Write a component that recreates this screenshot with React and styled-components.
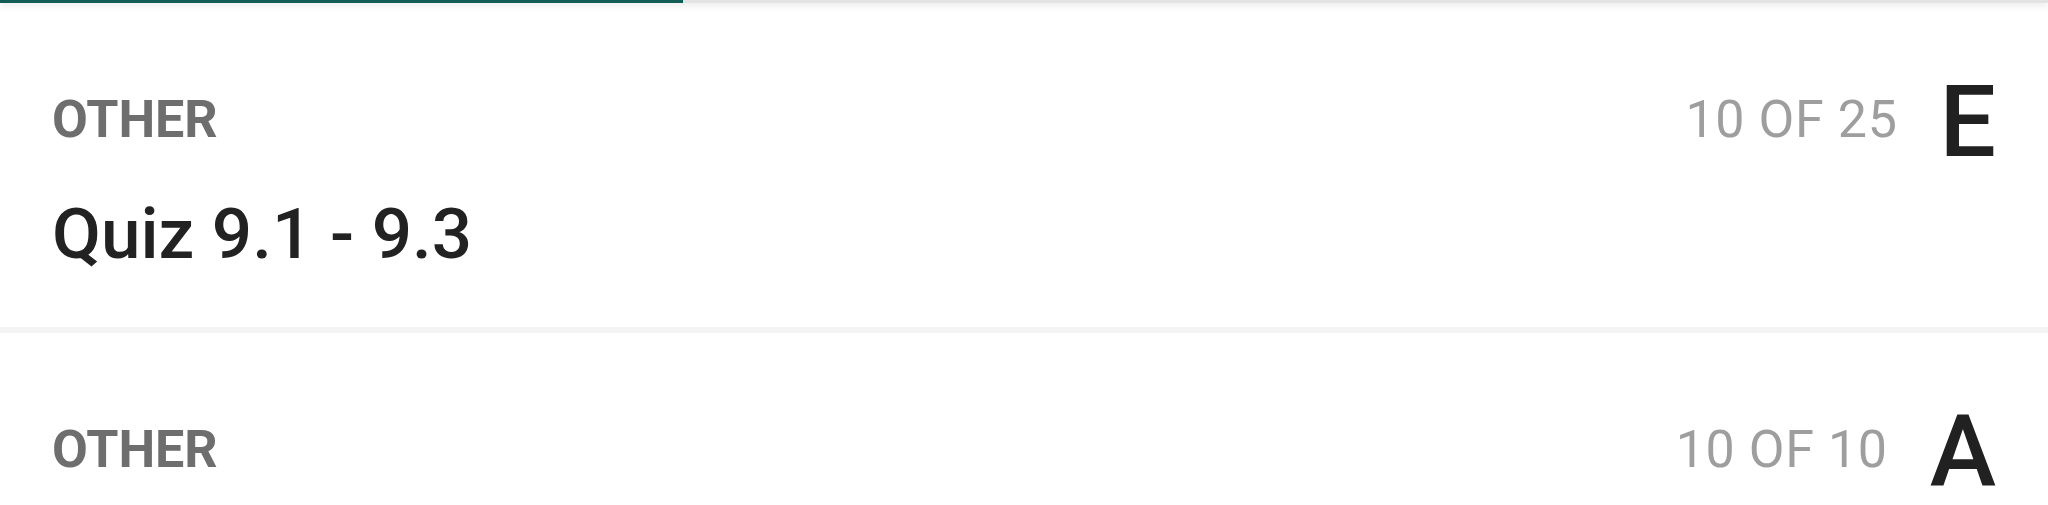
import React from 'react';
import styled, { createGlobalStyle } from 'styled-components';

const GlobalStyle = createGlobalStyle`
  html, body {
    margin: 0;
    padding: 0;
    background: #ffffff;
    overflow: hidden;
  }
  body {
    font-family: Roboto, "Noto Sans", sans-serif;
    -webkit-font-smoothing: antialiased;
  }
`;

const Screen = styled.div`
  width: 100%;
  min-height: 100vh;
  background: #ffffff;
`;

const ProgressTrack = styled.div`
  position: relative;
  z-index: 1;
  height: 3px;
  background: #e3e3e3;
  box-shadow: 0 2px 7px rgba(0, 0, 0, 0.16);
`;

const ProgressFill = styled.div`
  height: 100%;
  background: #125c55;
`;

const List = styled.div`
  display: flex;
  flex-direction: column;
`;

const Item = styled.div`
  padding: 67px 52px 51px;
  border-bottom: 6px solid #f4f4f4;
`;

const Header = styled.div`
  display: flex;
  align-items: center;
  justify-content: space-between;
  height: 100px;
`;

const Category = styled.span`
  font-size: 52px;
  font-weight: 700;
  color: #6e6e6e;
  line-height: 1.2;
`;

const Meta = styled.div`
  display: flex;
  align-items: center;
  gap: 42px;
`;

const Count = styled.span`
  font-size: 52px;
  font-weight: 400;
  letter-spacing: 0.6px;
  color: #9e9e9e;
  line-height: 1.2;
`;

const Grade = styled.span`
  font-size: 100px;
  font-weight: 500;
  color: #212121;
  line-height: 92px;
  padding-top: 4px;
`;

const Title = styled.div`
  margin-top: 22px;
  font-size: 71px;
  font-weight: 500;
  color: #222222;
  line-height: 84px;
`;

const assignments = [
  { category: 'OTHER', title: 'Quiz 9.1 - 9.3', score: 10, total: 25, grade: 'E' },
  { category: 'OTHER', score: 10, total: 10, grade: 'A' },
];

export default function App() {
  const progress = 683 / 2048;
  return (
    <Screen>
      <GlobalStyle />
      <ProgressTrack>
        <ProgressFill style={{ width: `${progress * 100}%` }} />
      </ProgressTrack>
      <List>
        {assignments.map((a, i) => (
          <Item key={i}>
            <Header>
              <Category>{a.category}</Category>
              <Meta>
                <Count>{a.score} OF {a.total}</Count>
                <Grade>{a.grade}</Grade>
              </Meta>
            </Header>
            {a.title && <Title>{a.title}</Title>}
          </Item>
        ))}
      </List>
    </Screen>
  );
}
